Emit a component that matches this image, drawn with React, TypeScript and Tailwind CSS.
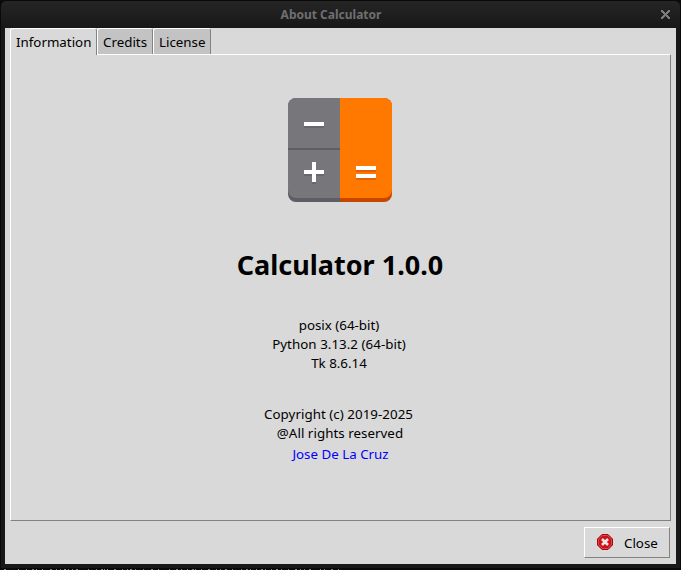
function CalculatorIcon() {
  return (
    <svg width="104" height="104" viewBox="0 0 104 104" className="block shrink-0">
      <clipPath id="tile">
        <rect width="104" height="104" rx="8" />
      </clipPath>
      <clipPath id="face">
        <rect y="-4" width="104" height="104" rx="8" />
      </clipPath>
      <g clipPath="url(#tile)">
        <rect width="52" height="104" fill="#5e5c64" />
        <rect x="52" width="52" height="104" fill="#c64600" />
        <g clipPath="url(#face)">
          <rect width="52" height="100" fill="#77767b" />
          <rect x="52" width="52" height="100" fill="#ff7800" />
        </g>
        <rect y="50" width="52" height="2" fill="#5e5c64" />
      </g>
      <path d="M16 28h20v2H16zM16 76h20v2H16zM24 84h4v2h-4z" fill="#68676d" />
      <path d="M68 72h20v2H68zM68 80h20v2H68z" fill="#e66100" />
      <path d="M16 24h20v4H16zM16 72h8v-8h4v8h8v4h-8v8h-4v-8h-8zM68 68h20v4H68zM68 76h20v4H68z" fill="#fff" />
    </svg>
  );
}

function StopIcon() {
  return (
    <svg width="16" height="16" viewBox="0 0 16 16" className="block shrink-0">
      <path d="M5 .5h6L15.500 5v6L11 15.500H5L.5 11V5z" fill="#cc1116" stroke="#a00a0e" />
      <path d="M5.400 1.500h5.200l3.900 3.900v5.200l-3.900 3.900H5.400l-3.900-3.900V5.400z" fill="none" stroke="#dd4a4e" />
      <path d="M5 5l6 6M11 5l-6 6" stroke="#f6e6e6" strokeWidth="2.600" />
    </svg>
  );
}

const specks = [
  4, 18, 26, 32, 36, 42, 50, 56, 60, 64, 68, 72, 76, 88, 96, 101, 104, 107, 114, 122, 127, 130, 135, 143, 151, 158,
  169, 176, 181, 187, 192, 195, 201, 208, 216, 220, 225, 232, 241, 246, 250, 256, 261, 265, 271, 276, 281, 288, 295,
  300, 304, 309, 320, 324, 331, 338,
];

function Tab({ label, className }: { label: string; className: string }) {
  return (
    <div className={"h-[26px] rounded-t-[3px] border-t border-l border-r border-t-white border-l-white border-r-[#828282] pt-[4px] leading-[18px] " + className}>
      {label}
    </div>
  );
}

export default function App() {
  return (
    <div className="flex h-[570px] w-[681px] flex-col overflow-hidden bg-[#0b0b0c] font-['Noto_Sans',sans-serif] text-[13.333px] text-black">
      <div className="flex h-[569px] flex-col rounded-t-[6px] border-r border-b border-l border-[#090909] bg-[#181818]">
        <header className="flex h-[28px] shrink-0 items-center rounded-t-[6px] border-t border-[#090909] bg-linear-to-b from-[#252525] to-[#181818] pr-[10px] pl-[19px]">
          <div className="flex-1 pr-[19px] text-center text-[12px] leading-[18px] font-bold text-[#6f6f6f]">
            About Calculator
          </div>
          <svg width="9" height="9" viewBox="0 0 9 9" shapeRendering="crispEdges" className="block">
            <path d="M0 0h2v1h1v1h1v1h1V2h1V1h1V0h2v2H8v1H7v1H6v1h1v1h1v1h1v2H7V8H6V7H5V6H4v1H3v1H2v1H0V7h1V6h1V5h1V4H2V3H1V2H0z" fill="#7c7c7c" />
          </svg>
        </header>
        <main className="mx-[4px] flex h-[536px] shrink-0 flex-col bg-[#d9d9d9] pr-[5px] pl-[5px]">
          <div className="flex h-[26px] shrink-0">
            <Tab label="Information" className="relative h-[27px] w-[87px] bg-[#d9d9d9] pl-[5px]" />
            <Tab label="Credits" className="w-[56px] bg-[#c3c3c3] pl-[5px]" />
            <Tab label="License" className="w-[58px] bg-[#c3c3c3] pl-[5px]" />
          </div>
          <section className="flex h-[467px] shrink-0 flex-col items-center border-t border-r border-b border-l border-t-white border-r-[#828282] border-b-[#828282] border-l-white pt-[43px] pr-px">
            <CalculatorIcon />
            <h1 className="mt-[45px] h-[36px] text-[27px] leading-[36px] font-bold">Calculator 1.0.0</h1>
            <div className="mt-[33px] pr-[2px] text-center leading-[19px]">
              <p>posix (64-bit)</p>
              <p className="tracking-[0.04px]">Python 3.13.2 (64-bit)</p>
              <p>Tk 8.6.14</p>
            </div>
            <div className="mt-[32px] text-center leading-[19px]">
              <p className="pr-[3px] tracking-[0.04px]">Copyright (c) 2019-2025</p>
              <p className="tracking-[0.04px]">@All rights reserved</p>
              <p className="mt-[2px] pl-[1px] text-[#0000ff]">Jose De La Cruz</p>
            </div>
          </section>
          <footer className="flex justify-end pt-[6px] pr-px">
            <button className="flex h-[31px] w-[86px] items-center border border-t-white border-r-[#828282] border-b-[#828282] border-l-white pb-px pl-[12px]">
              <StopIcon />
              <span className="ml-[11px] pt-[2px] leading-[18px]">Close</span>
            </button>
          </footer>
        </main>
      </div>
      <svg width="681" height="1" className="block shrink-0">
        {specks.map((x, i) => (
          <rect key={x} x={x} y="0" width={i % 3 === 0 ? 2 : 1} height="1" fill={i % 4 === 0 ? "#6f8598" : i % 4 === 1 ? "#968675" : "#777b80"} />
        ))}
      </svg>
    </div>
  );
}
